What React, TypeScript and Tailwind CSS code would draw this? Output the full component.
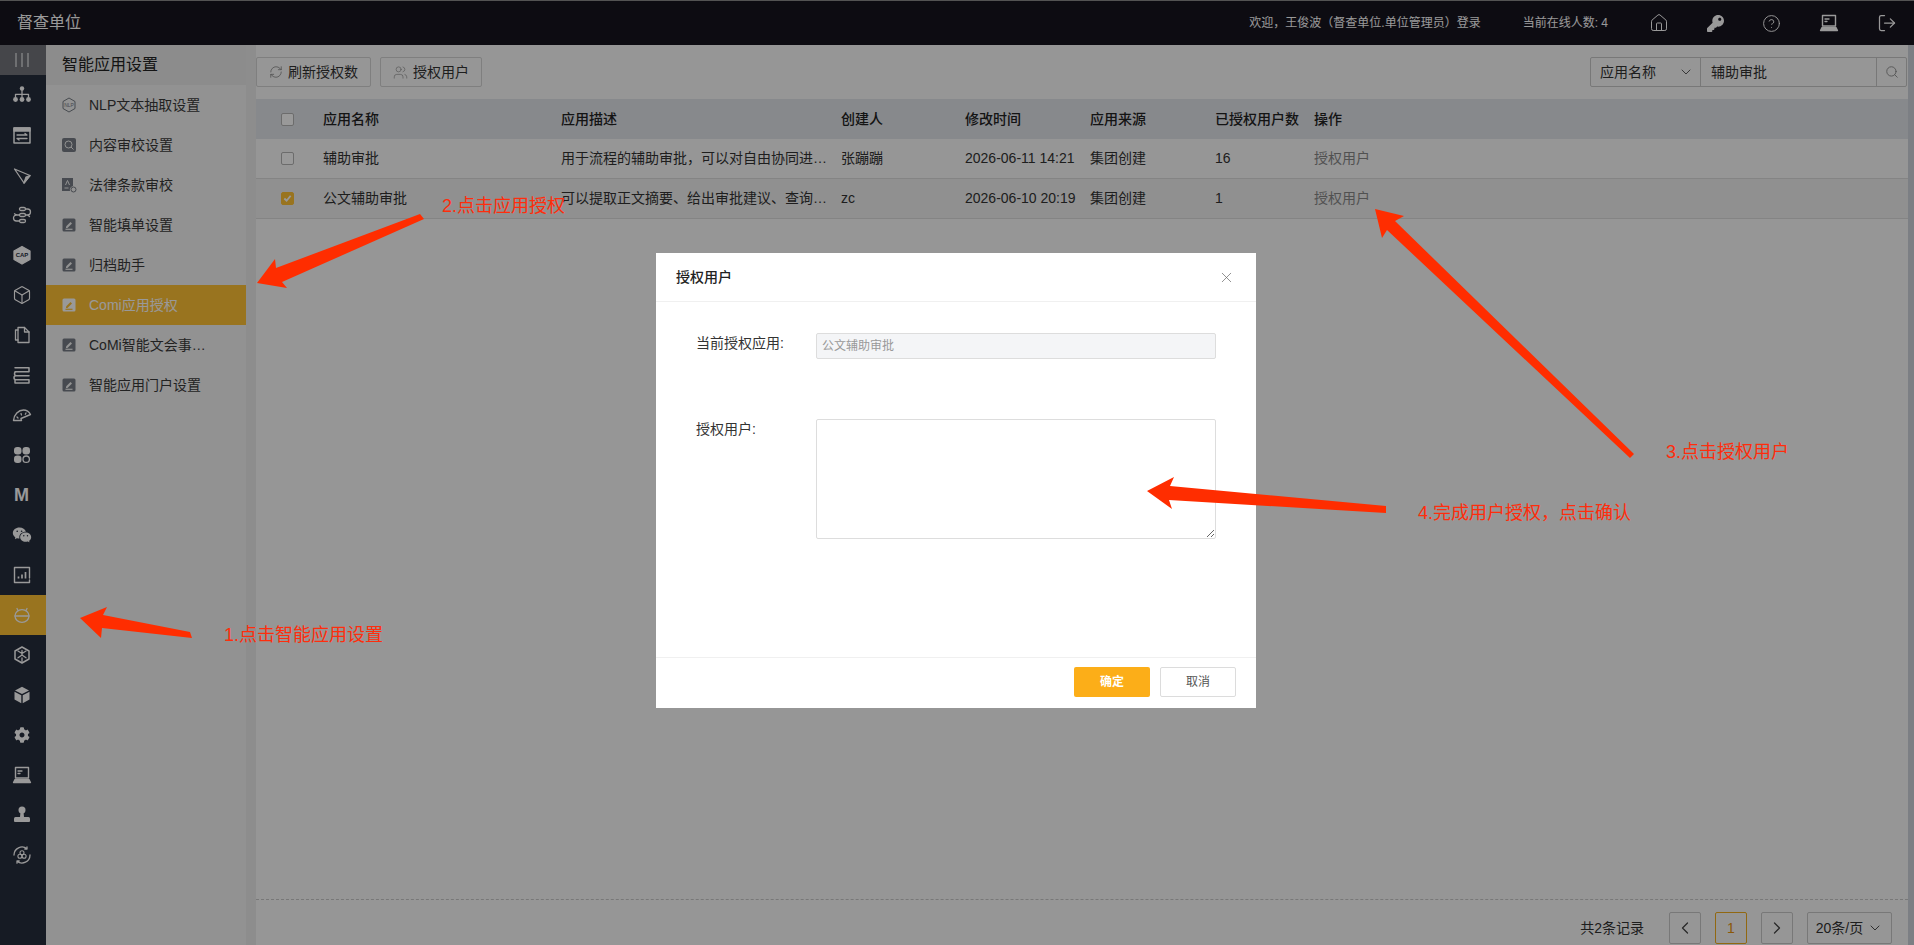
import type { ReactNode } from 'react';
import { ChevronDown, ChevronLeft, ChevronRight, CircleHelp, Box, House, LogOut, RefreshCw, Search, Users, X } from 'lucide-react';
import { FaCog, FaKey } from 'react-icons/fa';
import { RiWechatFill } from 'react-icons/ri';

const Svg = ({ children, size = 20 }: { children: ReactNode; size?: number }) => (
    <svg width={size} height={size} viewBox="0 0 20 20" fill="none" stroke="currentColor" strokeWidth="1.3" strokeLinejoin="round" strokeLinecap="round">
        {children}
    </svg>
);

const LaptopIcon = () => (
    <Svg>
        <rect x="3.500" y="2.500" width="13" height="10.500" strokeWidth="1.400" />
        <path d="M6 6h4M6 8.500h2" />
        <path d="M3 14.500h14l1.500 3H1.500z" fill="currentColor" />
    </Svg>
);

// left rail, top to bottom
const railIcons: ReactNode[] = [
    <Svg key="tree">
        <circle cx="10" cy="3.500" r="2.200" fill="currentColor" stroke="none" />
        <path d="M10 5v7M3.500 12V9.300h13V12" />
        <circle cx="3.500" cy="14.500" r="2.400" fill="currentColor" stroke="none" />
        <circle cx="10" cy="14.500" r="2.400" fill="currentColor" stroke="none" />
        <circle cx="16.500" cy="14.500" r="2.400" fill="currentColor" stroke="none" />
    </Svg>,
    <Svg key="panel">
        <rect x="2" y="3" width="16" height="15" strokeWidth="1.500" />
        <rect x="2" y="3" width="16" height="3" fill="currentColor" />
        <path d="M5 10h10l-2-1.500M15 13.500H5l2 1.500" />
    </Svg>,
    <Svg key="pen">
        <path d="M2.500 4 18 10.500 12 18z" />
        <path d="M18 10.500 12 18l2-6z" fill="currentColor" />
    </Svg>,
    <Svg key="flow">
        <rect x="7.500" y="2.500" width="6" height="3" rx="1.500" />
        <rect x="7.500" y="14.500" width="6" height="3" rx="1.500" />
        <rect x="7.500" y="8.500" width="6" height="3" rx="1.500" />
        <path d="M13.500 4h2a3 3 0 0 1 0 6h-2M7.500 10H4.500a3 3 0 0 0 0 6h3M2.500 8.800l2 1.200M17.500 11.500l-2-1.500" />
    </Svg>,
    <Svg key="cap">
        <path d="M10 1.500 18 6v8.500l-8 4.500-8-4.500V6z" fill="currentColor" />
        <text x="10" y="12.200" textAnchor="middle" fontSize="6" fontWeight="700" fill="#262d3c" stroke="none" fontFamily="Liberation Sans">CAP</text>
    </Svg>,
    <Box key="box" size={20} strokeWidth={1.400} />,
    <Svg key="files">
        <path d="M6 2.500h6.500L17 7v10.500H6z" />
        <path d="M12.500 2.500V7H17M6 5H3.500v10H6" />
    </Svg>,
    <Svg key="stack">
        <path d="M3 2.800h14v4H4.500a1.800 1.800 0 0 0 0 4H17v0M3 10.800h13.500M4 10.800a2 2 0 0 0 0 4h13M3 14.800V18h14v-3.200M3 6.800h14" strokeWidth="1.500" />
    </Svg>,
    <Svg key="gauge">
        <path d="M1.500 15.500C2 9.500 6.500 5 11.500 5c3 0 5.500 1.700 7 4.500L9 13.500l.5 2z" strokeWidth="1.400" />
        <path d="M5 12l1 1M9 8.500l.5 1.500M14 8l-.7 1.300" />
    </Svg>,
    <Svg key="clover">
        <rect x="2" y="2" width="7.500" height="7.500" rx="3.200" fill="currentColor" stroke="none" />
        <rect x="10.500" y="2" width="7.500" height="7.500" rx="3.200" fill="currentColor" stroke="none" />
        <rect x="2" y="10.500" width="7.500" height="7.500" rx="3.200" fill="currentColor" stroke="none" />
        <circle cx="14.200" cy="14.200" r="3.200" />
    </Svg>,
    <span key="m" className="text-[18px] leading-none font-black">M</span>,
    <RiWechatFill key="wechat" size={20} />,
    <Svg key="chart">
        <path d="M17.500 15V17.500H2.500v-15h15V13" strokeWidth="1.400" />
        <path d="M6.500 13.500v-2M10 13.500v-4M13.500 13.500v-6.500" strokeWidth="1.700" strokeLinecap="butt" />
    </Svg>,
    <Svg key="robot">
        <ellipse cx="10" cy="11" rx="7" ry="6.300" />
        <path d="M3 11h14M6 5.500 5 3.500M14 5.500l1-2" />
    </Svg>,
    <Svg key="hexy">
        <path d="M10 2 17 6v8l-7 4-7-4V6z" strokeWidth="1.500" />
        <path d="M10 10V5.500M10 10l-4 2.800M10 10l4 2.800M6 6l4 2.500 4-2.500M10 13v4" />
    </Svg>,
    <Svg key="cube">
        <path d="M10 1.800 17 5.500 10 9 3 5.500z" fill="currentColor" stroke="none" />
        <path d="M2.500 6.800 9.300 10.300v8L2.500 14.500zM17.500 6.800 10.700 10.300v8l6.800-3.800z" fill="currentColor" stroke="none" />
    </Svg>,
    <FaCog key="gear" size={16} />,
    <LaptopIcon key="laptop" />,
    <Svg key="stamp">
        <circle cx="10" cy="5" r="3.500" fill="currentColor" stroke="none" />
        <path d="M8.500 7h3l.5 5H8z" fill="currentColor" stroke="none" />
        <path d="M2 13.500q0-1.500 1.500-1.500h13q1.500 0 1.500 1.500V16q0 1-1 1H3q-1 0-1-1z" fill="currentColor" stroke="none" />
    </Svg>,
    <Svg key="cycle">
        <path d="M18 10a8 8 0 0 1-13 6.200M2 10a8 8 0 0 1 13-6.200M15 1.800v2.200h-2.200M5 18.200V16h2.200" />
        <circle cx="10" cy="7.700" r="2" strokeWidth="1.100" />
        <circle cx="7.900" cy="11.300" r="2" strokeWidth="1.100" />
        <circle cx="12.100" cy="11.300" r="2" strokeWidth="1.100" />
    </Svg>,
];

const EditIcon = ({ pen = '#f3f3f3' }: { pen?: string }) => (
    <svg width="16" height="16" viewBox="0 0 16 16">
        <rect x="1.500" y="1.500" width="13" height="13" rx="1.500" fill="currentColor" />
        <path d="M5 9.500 9.500 5 11 6.500 6.500 11H5z" fill={pen} />
        <path d="M4.500 12.300h7" stroke={pen} strokeWidth="1.200" fill="none" />
    </svg>
);

const menu: { label: string; icon: ReactNode; active?: boolean }[] = [
    {
        label: 'NLP文本抽取设置',
        icon: (
            <svg width="16" height="16" viewBox="0 0 16 16" fill="none" stroke="currentColor">
                <path d="M8 1 14 4.500v7L8 15l-6-3.500v-7z" />
                <text x="8" y="10" textAnchor="middle" fontSize="5" fill="currentColor" stroke="none" fontFamily="Liberation Sans">NLP</text>
            </svg>
        ),
    },
    {
        label: '内容审校设置',
        icon: (
            <svg width="16" height="16" viewBox="0 0 16 16" fill="none">
                <rect x="1" y="1" width="14" height="14" rx="2" fill="currentColor" />
                <circle cx="7.500" cy="7.500" r="3.500" stroke="#f3f3f3" />
                <path d="m10 10 2.500 2.500" stroke="#f3f3f3" />
            </svg>
        ),
    },
    {
        label: '法律条款审校',
        icon: (
            <svg width="16" height="16" viewBox="0 0 16 16" fill="none">
                <path d="M1 1h11v8a4 4 0 0 0-3 5H1z" fill="currentColor" />
                <path d="M4.500 8 6.500 3.500 8.500 8M3.500 11h4" stroke="#f3f3f3" />
                <circle cx="12.500" cy="12.500" r="2.500" stroke="currentColor" />
            </svg>
        ),
    },
    { label: '智能填单设置', icon: <EditIcon /> },
    { label: '归档助手', icon: <EditIcon /> },
    { label: 'Comi应用授权', icon: <EditIcon pen="#ffc235" />, active: true },
    { label: 'CoMi智能文会事项设置', icon: <EditIcon /> },
    { label: '智能应用门户设置', icon: <EditIcon /> },
];

const tableCols = 'grid grid-cols-[67px_238px_280px_124px_125px_125px_99px_1fr] items-center';

const rows = [
    { name: '辅助审批', desc: '用于流程的辅助审批，可以对自由协同进行智能审批分析', owner: '张蹦蹦', time: '2026-06-11 14:21', source: '集团创建', count: '16', checked: false },
    { name: '公文辅助审批', desc: '可以提取正文摘要、给出审批建议、查询相关的公文内容', owner: 'zc', time: '2026-06-10 20:19', source: '集团创建', count: '1', checked: true },
];

const Checkbox = ({ checked }: { checked?: boolean }) => (
    <span className={`ml-[25px] flex h-[13px] w-[13px] items-center justify-center rounded-[2px] border ${checked ? 'border-[#ffc235] bg-[#ffc235]' : 'border-[#b5b5b5] bg-white'}`}>
        {checked && (
            <svg width="9" height="9" viewBox="0 0 10 10" fill="none" stroke="#fff" strokeWidth="2">
                <path d="M1.500 5 4 7.500 8.500 2" />
            </svg>
        )}
    </span>
);

const PagerButton = ({ children, active }: { children: ReactNode; active?: boolean }) => (
    <span className={`flex h-8 w-8 items-center justify-center rounded-[2px] border bg-[#fafafa] ${active ? 'border-[#f2ae1d] text-[#e8930c]' : 'border-[#c8c8c8] text-[#444]'}`}>
        {children}
    </span>
);

function TopBar() {
    return (
        <header className="flex h-[45px] shrink-0 items-center border-t border-[#8a8a8a] bg-[#17141f] pl-[17px] text-white">
            <span className="text-[16px]">督查单位</span>
            <span className="ml-auto text-[12px]">欢迎，王俊波（督查单位.单位管理员）登录</span>
            <span className="ml-[42px] text-[12px]">当前在线人数: 4</span>
            <div className="ml-[41px] flex items-center gap-[38px] pr-[17px]">
                <House size={20} strokeWidth={1.200} />
                <FaKey size={17} />
                <CircleHelp size={19} strokeWidth={1.200} />
                <LaptopIcon />
                <LogOut size={20} strokeWidth={1.500} />
            </div>
        </header>
    );
}

function Rail() {
    return (
        <aside className="w-[46px] shrink-0 bg-[#262d3c] text-white">
            <div className="flex h-[30px] items-center justify-center gap-[4px] bg-[#74767c] pr-[3px]">
                <i className="h-[14px] w-[2px] bg-white/50" />
                <i className="h-[14px] w-[2px] bg-white/50" />
                <i className="h-[14px] w-[2px] bg-white/50" />
            </div>
            {railIcons.map((icon, i) => (
                <div key={i} className={`flex h-10 items-center justify-center pr-[3px] ${i === 13 ? 'bg-[#ffc235]' : ''}`}>
                    {icon}
                </div>
            ))}
        </aside>
    );
}

function SideMenu() {
    return (
        <nav className="w-[200px] shrink-0 bg-[#f3f3f3] text-[14px] text-[#333]">
            <div className="flex h-10 items-center bg-[#e9e9e9] pl-[16px] text-[16px] text-[#222]">智能应用设置</div>
            {menu.map((item) => (
                <div key={item.label} className={`flex h-10 items-center gap-[12px] pl-[15px] ${item.active ? 'bg-[#ffc235] text-white' : 'text-[#3a3a3a]'}`}>
                    <span className={`shrink-0 ${item.active ? 'text-white' : 'text-[#777c85]'}`}>{item.icon}</span>
                    <span className="w-[118px] truncate">{item.label}</span>
                </div>
            ))}
        </nav>
    );
}

function MainPanel() {
    return (
        <main className="ml-[10px] flex min-w-0 flex-1 flex-col bg-[#fafafa] text-[14px] text-[#333]">
            <div className="flex h-[54px] shrink-0 items-center gap-[9px]">
                <button className="flex h-[30px] w-[115px] items-center justify-center gap-[5px] rounded-[2px] border border-[#d4d4d4]">
                    <RefreshCw size={14} strokeWidth={1.200} className="text-[#777]" />
                    刷新授权数
                </button>
                <button className="flex h-[30px] w-[102px] items-center justify-center gap-[5px] rounded-[2px] border border-[#d4d4d4]">
                    <Users size={15} strokeWidth={1} className="text-[#888]" />
                    授权用户
                </button>
                <div className="ml-auto mr-[1px] flex h-[30px] w-[317px] rounded-[2px] border border-[#c8c8c8]">
                    <span className="flex w-[110px] items-center border-r border-[#c8c8c8] pl-[9px]">
                        应用名称
                        <ChevronDown size={16} strokeWidth={1.200} className="ml-auto mr-[6px]" />
                    </span>
                    <span className="flex flex-1 items-center pl-[10px]">辅助审批</span>
                    <span className="flex w-[30px] items-center justify-center border-l border-[#c8c8c8]">
                        <Search size={14} strokeWidth={1.500} className="text-[#888]" />
                    </span>
                </div>
            </div>

            <div className={`${tableCols} h-10 shrink-0 bg-[#e1e4ea] font-medium text-[#222]`}>
                <Checkbox />
                <span>应用名称</span>
                <span>应用描述</span>
                <span>创建人</span>
                <span>修改时间</span>
                <span>应用来源</span>
                <span>已授权用户数</span>
                <span>操作</span>
            </div>
            {rows.map((row) => (
                <div key={row.name} className={`${tableCols} h-10 shrink-0 border-b border-[#dcdcdc] ${row.checked ? 'bg-[#f0f0f0]' : ''}`}>
                    <Checkbox checked={row.checked} />
                    <span>{row.name}</span>
                    <span className="w-[272px] truncate">{row.desc}</span>
                    <span>{row.owner}</span>
                    <span>{row.time}</span>
                    <span>{row.source}</span>
                    <span>{row.count}</span>
                    <span className="text-[#888]">授权用户</span>
                </div>
            ))}

            <div className="mt-auto flex h-[46px] shrink-0 items-start justify-end gap-[14px] border-t border-dashed border-[#c8c8c8] pr-[16px] pt-[12px]">
                <span className="mr-[11px] leading-8">共2条记录</span>
                <PagerButton><ChevronLeft size={20} strokeWidth={1.500} /></PagerButton>
                <PagerButton active>1</PagerButton>
                <PagerButton><ChevronRight size={20} strokeWidth={1.500} /></PagerButton>
                <span className="flex h-8 w-[85px] items-center justify-center gap-[4px] rounded-[2px] border border-[#c8c8c8]">
                    20条/页
                    <ChevronDown size={16} strokeWidth={1.300} />
                </span>
            </div>
        </main>
    );
}

function AuthDialog() {
    return (
        <div className="absolute inset-0 flex justify-center bg-black/40 pr-[2px] pt-[253px]">
            <div className="flex h-[455px] w-[600px] flex-col bg-white text-[14px] text-[#333]">
                <div className="flex h-[49px] shrink-0 items-center justify-between border-b border-[#f0f0f0] pl-[20px] pr-[21px]">
                    <span className="font-medium text-[#222]">授权用户</span>
                    <X size={17} strokeWidth={1} className="text-[#666]" />
                </div>
                <div className="flex flex-1 flex-col gap-[60px] pt-[31px]">
                    <div className="flex">
                        <label className="w-[160px] pl-[40px] leading-5">当前授权应用:</label>
                        <div className="flex h-[26px] w-[400px] items-center rounded-[2px] border border-[#dddddd] bg-[#f4f5f7] pl-[5px] text-[12px] text-[#999]">公文辅助审批</div>
                    </div>
                    <div className="flex">
                        <label className="w-[160px] pl-[40px] leading-5">授权用户:</label>
                        <textarea className="h-[120px] w-[400px] rounded-[2px] border border-[#dddddd] bg-white" readOnly />
                    </div>
                </div>
                <div className="flex h-[51px] shrink-0 items-start justify-end gap-[10px] border-t border-[#f0f0f0] pr-[20px] pt-[9px] text-[12px]">
                    <button className="h-[30px] w-[76px] rounded-[2px] bg-[#fcae18] font-bold text-white">确定</button>
                    <button className="h-[30px] w-[76px] rounded-[2px] border border-[#dcdcdc] bg-white text-[#555]">取消</button>
                </div>
            </div>
        </div>
    );
}

// red step notes someone drew on the screenshot
const arrows = [
    '80,618 107,607 103,615 190,632 192,638 102,628 101,638',
    '257,283 275,259 276,268 420,214 424,219 282,282 287,288',
    '1375,209 1404,216 1395,221 1634,454 1630,458 1387,230 1382,238',
    '1147,491 1174,477 1170,486 1386,506 1386,513 1169,500 1172,509',
];

const notes = [
    { text: '1.点击智能应用设置', cls: 'left-[224px] top-[623px]' },
    { text: '2.点击应用授权', cls: 'left-[442px] top-[194px]' },
    { text: '3.点击授权用户', cls: 'left-[1666px] top-[440px]' },
    { text: '4.完成用户授权，点击确认', cls: 'left-[1418px] top-[501px]' },
];

function Annotations() {
    return (
        <>
            <svg className="absolute inset-0" width="1914" height="945" fill="#ff2d00">
                {arrows.map((points) => (
                    <polygon key={points} points={points} />
                ))}
            </svg>
            {notes.map((note) => (
                <span key={note.text} className={`absolute whitespace-nowrap text-[18px] leading-6 text-[#ff2d0c] ${note.cls}`}>
                    {note.text}
                </span>
            ))}
        </>
    );
}

export default function App() {
    return (
        <div className="relative flex h-[945px] w-[1914px] flex-col overflow-hidden bg-[#ececec] font-['Liberation_Sans','Noto_Sans_CJK_SC',sans-serif]">
            <TopBar />
            <div className="flex min-h-0 flex-1">
                <Rail />
                <SideMenu />
                <MainPanel />
                <div className="w-[6px] shrink-0 bg-[#cfd4dc]" />
            </div>
            <AuthDialog />
            <Annotations />
        </div>
    );
}
